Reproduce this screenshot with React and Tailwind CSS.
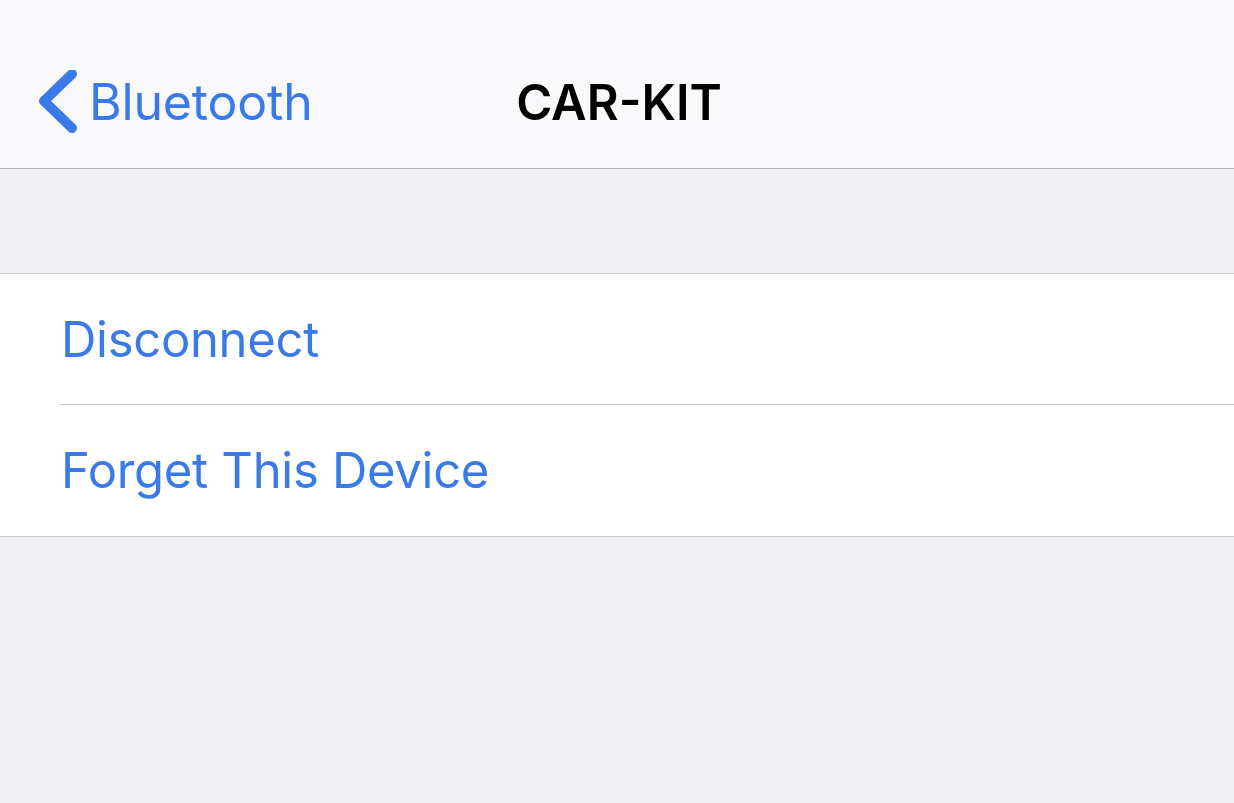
import React from "react";

export default function App() {
  const font = { fontFamily: "Inter, 'Noto Sans', 'Liberation Sans', sans-serif" };
  return (
    <div className="w-[1234px] h-[803px] bg-[#efeff4] flex flex-col overflow-hidden" style={font}>
      <div className="h-[169px] bg-[#f9f9fb] border-b border-[#b2b2b2] relative flex items-center">
        <div className="flex items-center pl-[38px] pt-[36px]">
          <svg width="40" height="64" viewBox="0 0 40 64" className="mr-[11px]">
            <path d="M34 4 L6 31 L34 58" fill="none" stroke="#3a7ae8" strokeWidth="10" strokeLinecap="round" strokeLinejoin="round" />
          </svg>
          <span className="text-[#3a7ae8] text-[50px] tracking-[-0.2px] leading-none">Bluetooth</span>
        </div>
        <div className="absolute left-0 right-0 top-0 bottom-0 flex items-center justify-center pt-[36px] pointer-events-none">
          <span className="text-black text-[49px] font-semibold leading-none ml-[4px]">CAR-KIT</span>
        </div>
      </div>
      <div className="h-[104px]" />
      <div className="bg-white border-t border-b border-[#c8c7cc]">
        <div className="h-[130px] flex items-center pl-[61px] relative">
          <span className="text-[#3a7ae8] text-[49px] leading-none tracking-[-0.3px]">Disconnect</span>
        </div>
        <div className="ml-[60px] h-px bg-[#c8c7cc]" />
        <div className="h-[131px] flex items-center pl-[61px]">
          <span className="text-[#3a7ae8] text-[49px] leading-none tracking-[-0.3px]">Forget This Device</span>
        </div>
      </div>
    </div>
  );
}
